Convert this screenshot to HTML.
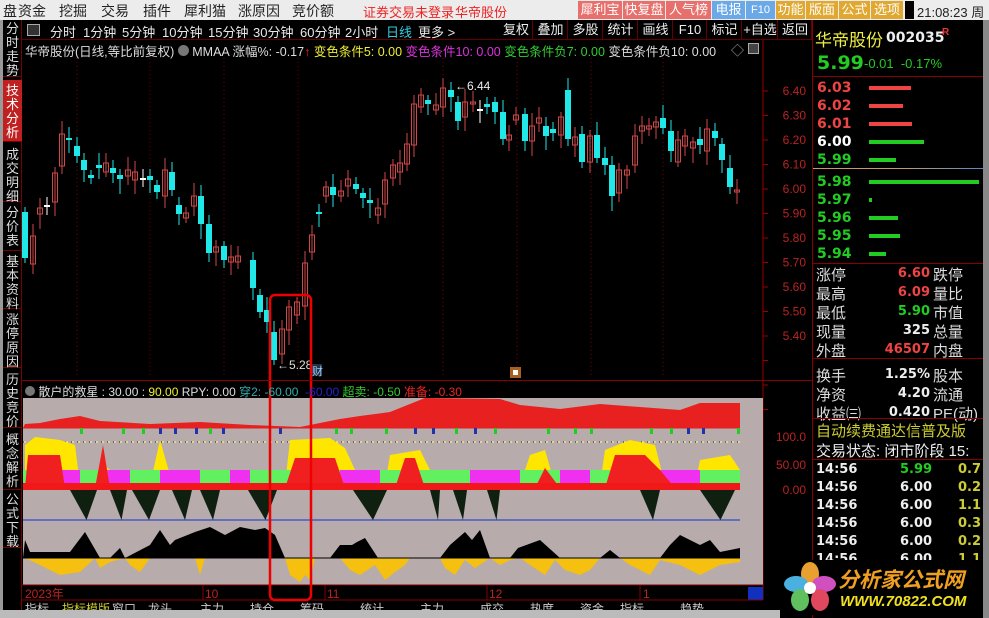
<!DOCTYPE html>
<html><head><meta charset="utf-8"><style>
*{margin:0;padding:0;box-sizing:border-box}
body{width:989px;height:618px;overflow:hidden;background:#000;font-family:"Liberation Sans","Noto Sans CJK SC",sans-serif;position:relative;color:#ddd}
.a{position:absolute;white-space:nowrap}
#top{position:absolute;left:0;top:0;width:989px;height:20px;background:#ececec;font-size:14px;color:#222}
.btn{position:absolute;top:1px;height:18px;font-size:13px;color:#fff;text-align:center;line-height:18px}
#tb span{position:absolute;top:22px;font-size:13px;color:#e8e8e8}
.rb{position:absolute;top:20px;height:20px;border-right:1px solid #600;font-size:13px;color:#eee;line-height:20px;text-align:center}
.tab{position:absolute;left:3px;width:19px;font-size:13px;color:#ddd;line-height:14px;text-align:center;border-bottom:1px solid #700}
.rp{font-size:14px;color:#ddd}
.num{font-family:"DejaVu Sans","Liberation Sans",sans-serif;font-weight:bold;font-size:13px}
</style></head><body>
<div id="top">
<span class="a" style="left:3px;top:1px">盘</span>
<span class="a" style="left:18px;top:1px">资金</span><span class="a" style="left:59px;top:1px">挖掘</span><span class="a" style="left:101px;top:1px">交易</span><span class="a" style="left:143px;top:1px">插件</span><span class="a" style="left:184px;top:1px">犀利猫</span><span class="a" style="left:238px;top:1px">涨原因</span><span class="a" style="left:292px;top:1px">竞价额</span>
<span class="a" style="left:363px;top:2px;color:#e22;font-size:13px">证券交易未登录</span><span class="a" style="left:455px;top:2px;color:#e22;font-size:13px">华帝股份</span>
<div class="btn" style="left:578px;width:44px;background:#e8706c">犀利宝</div>
<div class="btn" style="left:623px;width:42px;background:#e8706c">快复盘</div>
<div class="btn" style="left:666px;width:45px;background:#e8706c">人气榜</div>
<div class="btn" style="left:712px;width:33px;background:#6aa8e8">电报</div>
<div class="btn" style="left:746px;width:29px;background:#6aa8e8;font-size:11px">F10</div>
<div class="btn" style="left:776px;width:29px;background:#e0a830">功能</div>
<div class="btn" style="left:806px;width:32px;background:#e0a830">版面</div>
<div class="btn" style="left:839px;width:31px;background:#e0a830">公式</div>
<div class="btn" style="left:871px;width:32px;background:#e0a830">选项</div>
<div class="a" style="left:905px;top:1px;width:9px;height:18px;background:#000"></div>
<span class="a" style="left:917px;top:2px;font-size:13px;color:#222">21:08:23 周</span>
</div>
<div class="a" style="left:983px;top:20px;width:6px;height:598px;background:#888"></div>
<div class="a" style="left:0;top:20px;width:3px;height:598px;background:#999"></div>
<div id="tb">
<div class="a" style="left:27px;top:24px;width:13px;height:12px;border:1px solid #aaa;background:#333"></div>
<span style="left:50px">分时</span><span style="left:83px">1分钟</span><span style="left:122px">5分钟</span><span style="left:162px">10分钟</span><span style="left:208px">15分钟</span><span style="left:253px">30分钟</span><span style="left:300px">60分钟</span><span style="left:345px">2小时</span><span style="left:386px;color:#3cd">日线</span><span style="left:418px">更多 &gt;</span>
</div>
<div class="rb" style="left:500px;width:33px">复权</div><div class="rb" style="left:534px;width:34px">叠加</div><div class="rb" style="left:569px;width:34px">多股</div><div class="rb" style="left:604px;width:34px">统计</div><div class="rb" style="left:639px;width:34px">画线</div><div class="rb" style="left:674px;width:33px">F10</div><div class="rb" style="left:708px;width:34px">标记</div><div class="rb" style="left:743px;width:35px">+自选</div><div class="rb" style="left:779px;width:33px">返回</div>
<div class="a" style="left:22px;top:39px;width:790px;height:1px;background:#600"></div>
<div class="a" style="left:25px;top:41px;font-size:12.5px;color:#ddd">华帝股份(日线,等比前复权) <span style="display:inline-block;width:11px;height:11px;border-radius:50%;background:#777"></span> MMAA 涨幅%: -0.17<span style="color:#e22">↑</span> <span style="color:#ee3">变色条件5: 0.00</span> <span style="color:#d3d">变色条件10: 0.00</span> <span style="color:#3c3">变色条件负7: 0.00</span> 变色条件负10: 0.00</div>
<span class="a" style="left:731px;top:40px;color:#aaa;font-size:13px">◇</span>
<div class="a" style="left:748px;top:43px;width:11px;height:11px;border:1px solid #aaa;background:#444"></div>
<div class="a" style="left:3px;top:20px;width:19px;height:598px;background:#000;border-right:1px solid #700"></div>
<div class="tab" style="top:22px;height:55px">分<br>时<br>走<br>势</div>
<div class="tab" style="top:80px;height:62px;background:#c02020;color:#fff;padding-top:4px">技<br>术<br>分<br>析</div>
<div class="tab" style="top:145px;height:57px;padding-top:3px">成<br>交<br>明<br>细</div>
<div class="tab" style="top:203px;height:48px;padding-top:3px">分<br>价<br>表</div>
<div class="tab" style="top:252px;height:57px;padding-top:3px">基<br>本<br>资<br>料</div>
<div class="tab" style="top:310px;height:58px;padding-top:3px">涨<br>停<br>原<br>因</div>
<div class="tab" style="top:370px;height:58px;padding-top:3px">历<br>史<br>竞<br>价</div>
<div class="tab" style="top:430px;height:60px;padding-top:3px">概<br>念<br>解<br>析</div>
<div class="tab" style="top:490px;height:58px;padding-top:3px">公<br>式<br>下<br>载</div>
<svg class="a" style="left:0;top:0" width="989" height="618" id="sv"></svg>
<div class="a" style="left:22px;top:380px;width:790px;height:1px;background:#800"></div>
<div class="a" style="left:25px;top:383px;font-size:12px;color:#ddd"><span style="display:inline-block;width:10px;height:10px;border-radius:50%;background:#777"></span> 散户的救星 : 30.00 : <span style="color:#ee3">90.00</span> RPY: 0.00 <span style="color:#3aa">穿2: -60.00</span> &nbsp;<span style="color:#22c">-60.00</span> <span style="color:#3c3">超卖: -0.50</span> <span style="color:#e22">准备: -0.30</span></div>
<div class="a" style="left:812px;top:20px;width:1px;height:598px;background:#800"></div>
<span class="a" style="left:815px;top:26px;font-size:17px;color:#ee4">华帝股份</span>
<span class="a num" style="left:886px;top:30px;color:#eee;font-size:14px">002035</span><span class="a" style="left:942px;top:27px;color:#e33;font-size:10px;font-weight:bold">R</span>
<span class="a num" style="left:817px;top:52px;color:#2c2;font-size:19px">5.99</span>
<span class="a" style="left:864px;top:56px;color:#2c2;font-size:13px">-0.01 &nbsp;-0.17%</span>
<div class="a" style="left:813px;top:76px;width:170px;height:1px;background:#800"></div>
<div id="ob"></div>
<div class="a" style="left:813px;top:168px;width:170px;height:1px;background:linear-gradient(90deg,#c96,#c96 50%,#58c)"></div>
<div class="a" style="left:813px;top:263px;width:170px;height:1px;background:#800"></div>
<div id="st"></div>
<div class="a" style="left:813px;top:358px;width:170px;height:1px;background:#800"></div>
<div class="a" style="left:813px;top:418px;width:170px;height:1px;background:#800"></div>
<span class="a rp" style="left:816px;top:420px;color:#cc3;font-size:15px">自动续费通达信普及版</span>
<span class="a rp" style="left:816px;top:440px;color:#eee;font-size:15px">交易状态: 闭市阶段 15:</span>
<div class="a" style="left:813px;top:459px;width:170px;height:1px;background:#800"></div>
<div id="tk"></div>
<div class="a" style="left:780px;top:560px;width:203px;height:55px;background:#000"></div>
<svg class="a" style="left:782px;top:560px" width="56" height="55">
<ellipse cx="28" cy="14" rx="9" ry="12" fill="#e8a030"/><ellipse cx="14" cy="24" rx="12" ry="8" fill="#4ab0e0"/><ellipse cx="42" cy="24" rx="12" ry="8" fill="#d050c0"/><ellipse cx="18" cy="40" rx="9" ry="11" fill="#60c060"/><ellipse cx="38" cy="40" rx="9" ry="11" fill="#e04860"/><circle cx="28" cy="28" r="6" fill="#fff"/>
</svg>
<span class="a" style="left:838px;top:564px;font-size:21px;font-weight:bold;font-style:italic;color:#f0a020">分析家公式网</span>
<span class="a" style="left:840px;top:593px;font-size:15px;font-weight:bold;font-style:italic;color:#f0e020;font-family:'Liberation Sans',sans-serif">WWW.70822.COM</span>
<script>
var s='';
function R(x,y,w,h,f){s+='<rect x="'+x+'" y="'+y+'" width="'+w+'" height="'+h+'" fill="'+f+'"/>';}
function L(x1,y1,x2,y2,c,w,d){s+='<line x1="'+x1+'" y1="'+y1+'" x2="'+x2+'" y2="'+y2+'" stroke="'+c+'" stroke-width="'+(w||1)+'"'+(d?' stroke-dasharray="'+d+'"':'')+'/>';}
function T(x,y,t,c,sz,a){s+='<text x="'+x+'" y="'+y+'" fill="'+c+'" font-size="'+(sz||12)+'" font-family="Liberation Sans,Noto Sans CJK SC,sans-serif"'+(a?' text-anchor="'+a+'"':'')+'>'+t+'</text>';}
function P(pts,f){s+='<polygon points="'+pts.map(function(p){return p.join(',')}).join(' ')+'" fill="'+f+'"/>';}
[77,150,224,298,443,517,591,663].forEach(function(x){L(x,58,x,378,'#700',1,'1,3')});
L(763,40,763,600,'#900');
for(var i=0;i<14;i++){var y=91+i*24.5;L(763,y,768,y,'#900');}
['6.40','6.30','6.20','6.10','6.00','5.90','5.80','5.70','5.60','5.50','5.40'].forEach(function(t,i){T(806,95+i*24.5,t,'#b22',12,'end')});
var C=[[25,212,258,'c'],[33,236,264,'r'],[40,208,214,'r'],[47,205,206,'w'],[55,173,202,'r'],[62,134,166,'r'],[69,138,140,'c'],[77,146,156,'c'],[84,160,170,'c'],[91,175,178,'c'],[99,165,168,'c'],[106,163,172,'r'],[113,168,173,'c'],[120,175,179,'c'],[128,170,176,'r'],[135,172,180,'r'],[143,178,179,'w'],[150,176,180,'c'],[157,185,192,'c'],[165,170,196,'r'],[172,172,190,'c'],[179,205,214,'c'],[186,213,218,'r'],[194,196,206,'r'],[201,196,224,'c'],[209,224,253,'c'],[216,247,252,'r'],[224,246,260,'c'],[231,257,262,'r'],[238,256,262,'r'],[253,260,288,'c'],[260,295,312,'c'],[267,310,322,'c'],[274,332,360,'c'],[282,329,354,'r'],[289,307,330,'r'],[297,302,315,'r'],[305,263,306,'r'],[312,235,252,'r'],[319,212,214,'c'],[326,187,196,'r'],[333,187,195,'c'],[341,191,196,'r'],[348,179,186,'r'],[356,184,189,'c'],[363,193,198,'c'],[370,200,203,'c'],[378,208,215,'r'],[385,180,204,'r'],[393,165,178,'r'],[400,163,172,'r'],[407,144,164,'r'],[414,104,145,'r'],[421,95,107,'r'],[428,100,104,'c'],[436,105,110,'r'],[443,88,107,'r'],[451,90,97,'c'],[458,102,121,'c'],[465,102,117,'r'],[473,102,104,'r'],[480,109,110,'w'],[487,104,107,'c'],[495,102,112,'c'],[503,112,139,'c'],[509,135,140,'r'],[516,115,120,'r'],[525,114,141,'c'],[532,126,141,'r'],[539,118,123,'r'],[546,126,136,'c'],[553,129,133,'c'],[561,117,135,'r'],[568,90,139,'c'],[575,137,145,'r'],[582,134,162,'c'],[590,136,162,'r'],[597,135,158,'c'],[605,158,165,'c'],[612,165,196,'c'],[619,170,193,'r'],[627,170,175,'r'],[635,136,165,'r'],[642,126,131,'r'],[649,126,129,'r'],[656,122,127,'r'],[663,118,128,'c'],[671,131,151,'c'],[678,140,162,'r'],[685,136,146,'r'],[693,142,148,'r'],[700,139,145,'c'],[707,129,151,'r'],[715,131,138,'c'],[722,144,160,'c'],[730,168,187,'c'],[737,190,192,'r']];
C.forEach(function(c,i){var col=c[3]=='r'?'#d04848':c[3]=='c'?'#20e8e8':'#fff';var wt=c[1]-5-(i*7%9),wb=c[2]+5+(i*5%11);L(c[0],wt,c[0],wb,col);
 if(c[3]=='r')s+='<rect x="'+(c[0]-2.5)+'" y="'+c[1]+'" width="5" height="'+Math.max(1,c[2]-c[1])+'" fill="none" stroke="'+col+'"/>';else R(c[0]-3,c[1],6,Math.max(2,c[2]-c[1]),col);});
T(455,90,'←6.44','#eee',12);T(277,369,'←5.28','#ddd',12);
R(312,364,10,12,'#234');T(312,375,'财','#9cf',11);
R(510,367,11,11,'#a86020');R(513,370,5,5,'#fff');
R(23,398,740,187,'#b7abab');
P([[23,428],[25,424],[40,423],[60,419],[80,416],[100,421],[150,424],[200,422],[250,425],[300,427],[320,423],[340,419],[360,416],[390,412],[410,404],[425,398],[500,399],[520,405],[560,409],[600,404],[640,407],[680,410],[700,403],[740,403],[740,428]],'#e82020');
L(23,428,740,428,'#e02020');
for(var x=80;x<740;x+=13+(x*7%11)){if((x*3)%5<3)R(x,428,3,6,(x%3)?'#2c2':'#23a');}
L(23,442,740,442,'#ff8',1,'3,3');L(23,442,740,442,'#222',1,'1,5');
P([[25,485],[25,445],[35,437],[60,440],[75,445],[80,485]],'#ffe600');
P([[95,485],[100,462],[110,470],[125,485]],'#ffe600');
P([[150,485],[160,440],[170,475],[175,485]],'#ffe600');
P([[285,485],[290,440],[330,438],[345,448],[355,470],[360,485]],'#ffe600');
P([[385,485],[390,455],[420,450],[430,470],[435,485]],'#ffe600');
P([[520,485],[530,455],[545,450],[555,485]],'#ffe600');
P([[600,485],[605,450],[630,440],[655,445],[665,485]],'#ffe600');
P([[695,485],[700,460],[730,455],[740,470],[740,485]],'#ffe600');
R(23,470,717,14,'#60f060');
[[30,80],[100,130],[160,200],[230,250],[340,380],[470,520],[560,590],[640,700]].forEach(function(a){R(a[0],470,a[1]-a[0],14,'#f030f0')});
P([[25,488],[28,455],[60,455],[65,488]],'#f02020');
P([[95,488],[103,445],[110,488]],'#f02020');
P([[285,488],[295,458],[335,458],[345,488]],'#f02020');
P([[395,488],[405,458],[415,458],[425,488]],'#f02020');
P([[535,488],[545,468],[560,488]],'#f02020');
P([[605,488],[615,455],[645,455],[660,470],[675,488]],'#f02020');
R(23,483,717,7,'#f01818');
[[70,97],[110,127],[132,160],[172,192],[200,220],[248,277],[353,387],[430,440],[453,467],[487,500],[640,660],[700,735]].forEach(function(a){P([[a[0],490],[a[1],490],[(a[0]+a[1])/2+3,520]],'#102010')});
L(23,520,740,520,'#1030d0');
var bk=[[23,558],[25,540],[30,552],[70,552],[85,532],[100,558],[110,558],[120,548],[125,558],[150,545],[160,530],[170,545],[175,540],[195,532],[210,527],[225,535],[240,527],[255,530],[265,528],[275,535],[285,558],[330,558],[340,545],[352,545],[357,542],[365,538],[378,558],[440,558],[450,545],[465,532],[472,540],[480,530],[490,558],[510,558],[518,548],[540,540],[560,558],[600,558],[610,550],[620,558],[660,558],[670,545],[680,535],[700,545],[710,540],[720,552],[740,548],[740,558]];
P(bk,'#000');
P([[25,558],[40,565],[60,575],[80,572],[95,558],[100,568],[110,562],[125,558],[130,565],[140,572],[150,558],[195,558],[200,575],[205,558],[220,558],[285,558],[290,575],[300,582],[305,575],[310,580],[315,558],[340,558],[350,570],[360,575],[375,565],[385,580],[395,572],[405,565],[410,558],[440,558],[445,568],[455,575],[465,560],[475,568],[490,558],[500,565],[510,560],[520,558],[530,565],[545,575],[555,560],[565,570],[580,575],[590,570],[600,558],[620,558],[630,565],[640,570],[650,575],[660,560],[680,565],[700,575],[720,565],[740,562],[740,558]],'#f5c010');
L(23,558,740,558,'#000');
T(806,441,'100.0','#b22',12,'end');T(806,469,'50.00','#b22',12,'end');T(806,494,'0.00','#b22',12,'end');
L(22,585,763,585,'#800');
T(25,598,'2023年','#b22',12);L(203,585,203,600,'#800');T(205,598,'10','#b22',12);L(325,585,325,600,'#800');T(327,598,'11','#b22',12);L(487,585,487,600,'#800');T(489,598,'12','#b22',12);L(640,585,640,600,'#800');T(643,598,'1','#b22',12);
R(748,587,15,13,'#1030c0');
L(22,600,763,600,'#800');
[25,62,112,148,200,250,300,360,420,480,530,580,620,680].forEach(function(x,i){T(x,613,['指标','指标模版','窗口','龙头','主力','持仓','筹码','统计','主力','成交','热度','资金','指标','趋势'][i],i==1?'#cc3':'#ccc',12)});
s+='<rect x="270" y="295" width="41" height="305" rx="5" fill="none" stroke="#e00" stroke-width="2.5"/>';
R(0,610,780,8,'#bbb');
document.getElementById('sv').innerHTML=s;
var ob=[['6.03','#e44',42],['6.02','#e44',34],['6.01','#e44',43],['6.00','#fff',55],['5.99','#2c2',27],['5.98','#2c2',110],['5.97','#2c2',3],['5.96','#2c2',29],['5.95','#2c2',31],['5.94','#2c2',17]];
var h='';ob.forEach(function(o,i){var y=80+i*18+(i>4?4:0);h+='<span class="a num" style="left:817px;top:'+y+'px;color:'+o[1]+';font-size:14px">'+o[0]+'</span><div class="a" style="left:869px;top:'+(y+6)+'px;width:'+o[2]+'px;height:4px;background:'+(i<3?'#e44':'#2c2')+'"></div>';});
document.getElementById('ob').innerHTML=h;
var st=[['涨停','6.60','#e44','跌停'],['最高','6.09','#e44','量比'],['最低','5.90','#2c2','市值'],['现量','325','#eee','总量'],['外盘','46507','#e44','内盘'],['换手','1.25%','#eee','股本'],['净资','4.20','#eee','流通'],['收益㈢','0.420','#eee','PE(动)']];
h='';st.forEach(function(o,i){var y=264+i*19+(i>4?6:0);h+='<span class="a rp" style="left:816px;top:'+y+'px;font-size:15px">'+o[0]+'</span><span class="a num" style="right:'+(989-930)+'px;top:'+(y+2)+'px;color:'+o[2]+'">'+o[1]+'</span><span class="a rp" style="left:933px;top:'+y+'px;font-size:15px">'+o[3]+'</span>';});
document.getElementById('st').innerHTML=h;
var tk=[['5.99','#2c2','0.7'],['6.00','#eee','0.2'],['6.00','#eee','1.1'],['6.00','#eee','0.3'],['6.00','#eee','0.2'],['6.00','#eee','1.1']];
h='';tk.forEach(function(o,i){var y=462+i*18;h+='<span class="a num" style="left:816px;top:'+y+'px;color:#eee">14:56</span><span class="a num" style="left:900px;top:'+y+'px;color:'+o[1]+'">'+o[0]+'</span><span class="a num" style="left:958px;top:'+y+'px;color:#cc3">'+o[2]+'</span>';});
document.getElementById('tk').innerHTML=h;
</script>
</body></html>
